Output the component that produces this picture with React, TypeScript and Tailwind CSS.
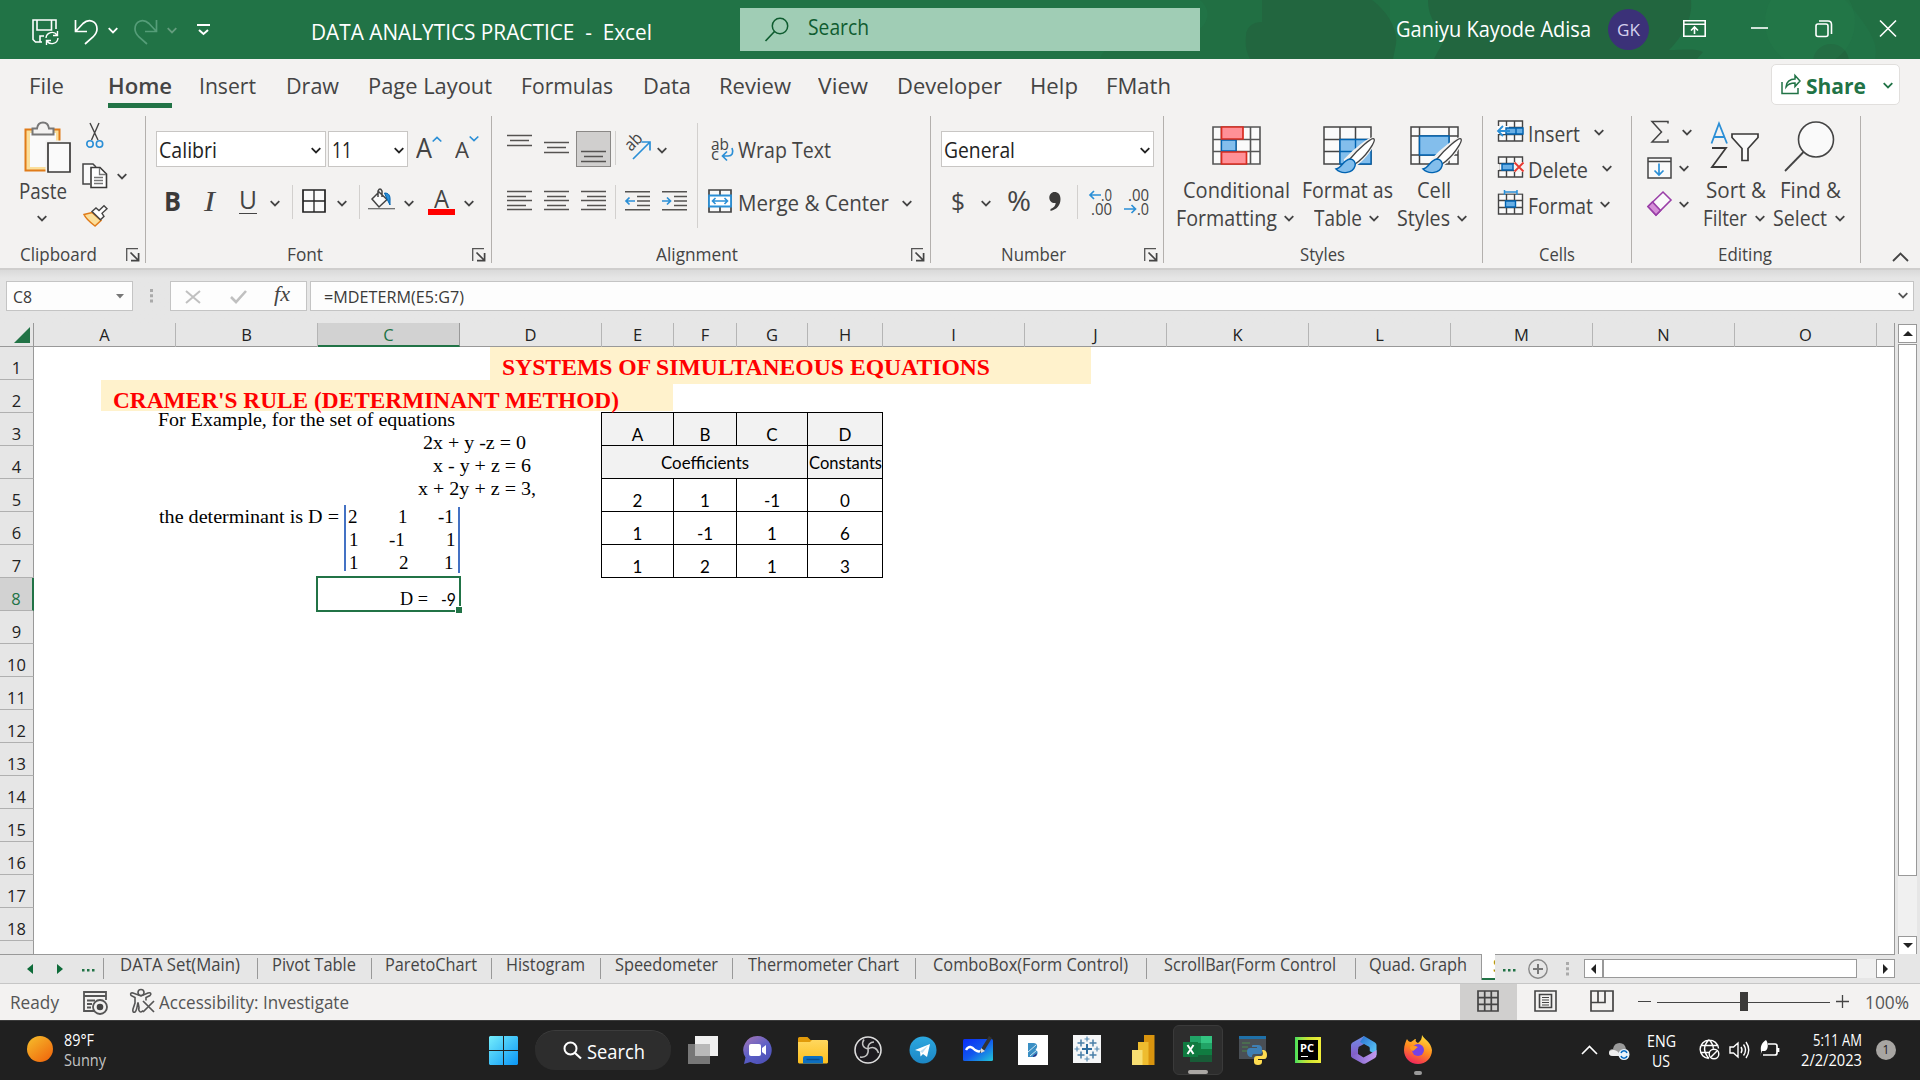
import React, { useLayoutEffect, useRef, useState } from 'react';

type P = { c?: string; children?: React.ReactNode };

/* Single line of text stretched horizontally to fill the width of its box. */
function T({ c = '', children }: P) {
  const box = useRef<HTMLSpanElement>(null);
  const inner = useRef<HTMLSpanElement>(null);
  const [k, setK] = useState(1);
  useLayoutEffect(() => {
    if (box.current && inner.current && inner.current.offsetWidth) {
      setK(box.current.clientWidth / inner.current.getBoundingClientRect().width);
    }
  }, []);
  return (
    <span ref={box} className={`block shrink-0 whitespace-pre ${c}`}>
      <span ref={inner} className="inline-block origin-left" style={{ transform: `scaleX(${k})` }}>
        {children}
      </span>
    </span>
  );
}

function I({ w, h, c = '', children }: P & { w: number; h: number }) {
  return (
    <svg width={w} height={h} viewBox={`0 0 ${w} ${h}`} fill="none" className={`block shrink-0 overflow-visible ${c}`}>
      {children}
    </svg>
  );
}

function Chev({ c = '' }: P) {
  return (
    <I w={10} h={7} c={c}>
      <path d="M.7 1.2 5 5.4 9.3 1.2" stroke="currentColor" strokeWidth="1.8" />
    </I>
  );
}

function Launcher({ c = '' }: P) {
  return (
    <I w={14} h={14} c={c}>
      <path d="M.7 13V.7H12" stroke="#555" strokeWidth="1.3" />
      <path d="M4.5 4.5 12 12M12.6 5v7.6H5" stroke="#444" strokeWidth="1.7" />
    </I>
  );
}

function Group({ c, children }: P) {
  return <div className={`flex h-[147px] shrink-0 flex-col border-r border-[#b3b0ad] ${c}`}>{children}</div>;
}

function Lines({ rows, w = 25, h = 21, c = '' }: { rows: [number, number, number][]; w?: number; h?: number; c?: string }) {
  return (
    <I w={w} h={h} c={c}>
      {rows.map(([x, y, l]) => (
        <path key={y} d={`M${x} ${y + 0.5}h${l}`} stroke="#555351" strokeWidth="1.5" />
      ))}
    </I>
  );
}

function TitleBar() {
  return (
    <div className="relative flex h-[59px] items-start overflow-hidden bg-[#217346] text-white">
      <svg width="820" height="59" viewBox="0 0 820 59" className="absolute top-0 right-0">
        <g fill="#22663f">
          <path d="M0 59c2-8 12-16 30-18 40 0 70-5 76-20 4-8 0-16-6-21h190v59z" opacity=".35" />
          <path d="M146 36c0-8 6-14 16-14V0h110c16 12 26 30 24 44l-3 15H150c-4-8-5-14-4-23z" />
          <path d="M328 0h263c2 20-10 38-22 50 14 0 26-2 34 2l-6 7H334c6-12 12-18 10-28-10-6-16-16-16-31z" />
          <circle cx="731" cy="62" r="18" />
          <path d="M745 0h75v59h-45c4-14-4-30-30-59z" opacity=".3" />
        </g>
        <circle cx="710" cy="22" r="45" fill="#257a4b" opacity=".35" />
      </svg>
      <div className="relative flex w-full items-start">
        <I w={27} h={27} c="ml-8 mt-[19px]">
          <path d="M10 23H3.5L1 20.500V1h23v9M5 1v10h14.500V1M8 23v-6h4" stroke="#fff" strokeWidth="1.6" />
          <path d="M14 19c.5-6 8-7.500 11-3M25.500 12v4.500H21M26 19c-.5 6-8 7.500-11 3M14.500 26v-4.500H19" stroke="#fff" strokeWidth="1.4" />
        </I>
        <I w={25} h={26} c="ml-[15px] mt-[19px]">
          <path d="M1.500 1v11.500H13M2 12 9 4.500C15-1 23 2 23 10c0 4-2 6-4 8l-8 7" stroke="#fff" strokeWidth="1.7" />
        </I>
        <Chev c="ml-[9px] mt-[27px]" />
        <I w={25} h={26} c="ml-[15px] mt-[19px] opacity-30">
          <path d="M23.500 1v11.500H12M23 12 16 4.500C10-1 2 2 2 10c0 4 2 6 4 8l8 7" stroke="#cfe" strokeWidth="1.7" />
        </I>
        <Chev c="ml-[9px] mt-[27px] opacity-30" />
        <I w={13} h={12} c="ml-5 mt-6">
          <path d="M0 1h13M2 6l4.500 4L11 6" stroke="#fff" strokeWidth="2" />
        </I>
        <T c="ml-[101px] mt-[17.5px] w-[341px] text-[21px] leading-[28px]">DATA ANALYTICS PRACTICE  -  Excel</T>
        <div className="ml-[88px] mt-2 flex h-[43px] w-[460px] items-start bg-[#a0cdb5] text-[#0f5c30]">
          <I w={24} h={25} c="ml-[25px] mt-[9px]">
            <circle cx="15" cy="9" r="7.700" stroke="currentColor" strokeWidth="1.5" />
            <path d="M9.500 14.500.5 24" stroke="currentColor" strokeWidth="1.700" />
          </I>
          <T c="ml-[19px] mt-[5px] w-[61px] text-[21px] leading-[28px]">Search</T>
        </div>
        <T c="ml-[196px] mt-[15px] w-[195px] text-[21px] leading-[28px]">Ganiyu Kayode Adisa</T>
        <div className="ml-[17px] mt-[9px] flex size-[41px] shrink-0 items-center justify-center rounded-full bg-[#3b3178] text-[16px] text-[#d5d0ee]">
          <T c="w-[23px]">GK</T>
        </div>
        <I w={23} h={17} c="ml-[34px] mt-5">
          <path d="M.8.800h21.400v15.400H.8zM.8 4.300h21.400M11.500 14V7.500M8 10.500 11.500 7l3.500 3.500" stroke="#fff" strokeWidth="1.6" />
        </I>
        <I w={17} h={2} c="ml-[45px] mt-[27px]"><path d="M0 1h17" stroke="#fff" strokeWidth="1.6" /></I>
        <I w={18} h={18} c="ml-[47px] mt-5">
          <rect x="1" y="4" width="12" height="12.500" rx="2" stroke="#fff" strokeWidth="1.6" />
          <path d="M4 1h9q3.500 0 3.500 3.500V14" stroke="#fff" strokeWidth="1.6" />
        </I>
        <I w={18} h={17} c="ml-[46px] mt-5"><path d="M1 .5 17 16.500M17 .5 1 16.500" stroke="#fff" strokeWidth="1.6" /></I>
      </div>
    </div>
  );
}

const MENU: [string, string][] = [
  ['Insert', 'ml-[27px] w-[57px]'],
  ['Draw', 'ml-[30px] w-[53px]'],
  ['Page Layout', 'ml-[29px] w-[124px]'],
  ['Formulas', 'ml-[29px] w-[92px]'],
  ['Data', 'ml-[30px] w-[48px]'],
  ['Review', 'ml-[28px] w-[72px]'],
  ['View', 'ml-[27px] w-[50px]'],
  ['Developer', 'ml-[29px] w-[105px]'],
  ['Help', 'ml-[28px] w-[48px]'],
  ['FMath', 'ml-[28px] w-[65px]'],
];

function MenuTabs() {
  return (
    <div className="flex h-[57px] items-start text-[22px] leading-[30px] text-[#444]">
      <T c="ml-[29px] mt-[11px] w-[35px]">File</T>
      <div className="ml-11 mt-[11px] h-[38px] w-16 border-b-[5px] border-[#217346]">
        <T c="w-16 font-semibold">Home</T>
      </div>
      {MENU.map(([t, c]) => (
        <T key={t} c={`mt-[11px] ${c}`}>{t}</T>
      ))}
      <div className="ml-auto mr-5 mt-[5px] flex h-[41px] w-[129px] items-start rounded-[5px] border border-[#e1dfdd] bg-white text-[#217346]">
        <I w={20} h={21} c="ml-[9px] mt-[9px]">
          <path d="M1 8v11.500h16V14" stroke="#217346" strokeWidth="1.5" />
          <path d="M5 13c0-5 4-8 9-8V1.500L19 7l-5 5.500V9c-4 0-7 1-9 4z" stroke="#217346" strokeWidth="1.5" />
        </I>
        <T c="ml-[5px] mt-[5px] w-[60px] font-bold">Share</T>
        <Chev c="ml-[17px] mt-[17px]" />
      </div>
    </div>
  );
}

function Brush() {
  return (
    <g>
      <path d="M51 13c2 2-9 19-20 26l-6 1-2-6C32 24 49 11 51 13z" fill="#fff" stroke="#f3f2f1" strokeWidth="4" />
      <path d="M51 13c2 2-8 18-19 25l-5-5C35 23 49 11 51 13z" fill="#fff" stroke="#444" strokeWidth="1.4" />
      <path d="M13 43c6-1 7-9 14-10 4 0 6 4 5 7-2 7-13 9-19 3z" fill="#83beec" stroke="#0063b1" strokeWidth="1.4" />
    </g>
  );
}

function RibbonClipboard() {
  return (
    <Group c="w-[146px]">
      <div className="flex h-[126px] shrink-0 items-start">
        <div className="ml-5 w-[52px] pt-[5px]">
          <I w={48} h={52} c="ml-1">
            <path d="M1.500 8.500h34v41h-34z" fill="#fbdf9b" stroke="#e07b19" strokeWidth="2" />
            <path d="M6 12h26v34H6z" fill="#fafafa" />
            <path d="M8.500 13.500V7.500H13c1-8 11-8 12 0h4.500v6z" fill="#f3f2f1" stroke="#777" strokeWidth="2" />
            <path d="M21.500 19.500H48V52H21.500z" fill="#f3f2f1" />
            <path d="M24 22h22v29H24z" fill="#fafafa" stroke="#3b3a39" strokeWidth="1.700" />
          </I>
          <T c="-ml-px mt-[4px] w-[48px] text-[21px] leading-[28px]">Paste</T>
          <Chev c="ml-[17px] mt-[10px]" />
        </div>
        <div className="ml-[10px] w-[26px] pt-[7px]">
          <I w={18} h={26} c="ml-1">
            <path d="M4 0l8 17M13 0 5.500 17" stroke="#444" strokeWidth="1.4" />
            <circle cx="4" cy="21" r="3.200" stroke="#2b8fd6" strokeWidth="1.6" />
            <circle cx="13.500" cy="21" r="3.200" stroke="#2b8fd6" strokeWidth="1.6" />
          </I>
          <I w={26} h={26} c="mt-[14px]">
            <path d="M8 21H1V1h10l3 3" fill="#fafafa" stroke="#444" strokeWidth="1.5" />
            <path d="M9 4.500h9l6.500 6.500v13.500H9z" fill="#fff" stroke="#3b3a39" strokeWidth="1.600" />
            <path d="M17.500 5v6.500H24M12 14.500h9M12 17.500h9M12 20.500h9" stroke="#777" strokeWidth="1.3" />
          </I>
          <I w={25} h={22} c="ml-[1px] mt-[16px]">
            <path d="M1 9.500 9 7.500l9 8-6 5.500C8 18 3 14 1 9.500z" fill="#fbdf9b" stroke="#e07b19" strokeWidth="1.500" />
            <path d="M9 6.500 13 3l3 2.500L21 .8l3 3-5 4.500 2 3-3.500 3.500z" fill="#fff" stroke="#444" strokeWidth="1.400" />
          </I>
        </div>
        <Chev c="ml-[9px] mt-[57px]" />
      </div>
      <div className="flex items-start">
        <T c="ml-5 w-[77px] text-[18.500px] leading-[24px]">Clipboard</T>
        <Launcher c="ml-[29px] mt-[6px]" />
      </div>
    </Group>
  );
}

function RibbonFont() {
  return (
    <Group c="w-[346px]">
      <div className="flex h-[126px] shrink-0 flex-col">
        <div className="mt-[15px] flex h-9 items-start text-[#222]">
          <div className="ml-[10px] flex h-9 w-[170px] items-start border border-[#c8c6c4] bg-white">
            <T c="ml-[2px] mt-[4px] w-[58px] text-[21px] leading-[28px]">Calibri</T>
            <Chev c="ml-[94px] mt-[15px]" />
          </div>
          <div className="ml-[2px] flex h-9 w-[80px] items-start border border-[#c8c6c4] bg-white">
            <T c="ml-[3px] mt-[4px] w-[20px] text-[21px] leading-[28px]">11</T>
            <Chev c="ml-[42px] mt-[15px]" />
          </div>
          <T c="ml-[8px] mt-[2px] w-4 text-[27px] leading-[30px] text-[#444]">A</T>
          <I w={10} h={7} c="mt-[5px]"><path d="M.7 5.500 5 1.500l4.300 4" stroke="#2b8fd6" strokeWidth="1.7" /></I>
          <T c="ml-[13px] mt-[3px] w-[14px] text-[22px] leading-[30px] text-[#444]">A</T>
          <I w={10} h={7} c="mt-[4px]"><path d="M.7 1.500 5 5.500l4.300-4" stroke="#2b8fd6" strokeWidth="1.7" /></I>
        </div>
        <div className="mt-[18px] flex h-[34px] items-start">
          <T c="ml-[18px] mt-0 w-[17px] text-[26px] leading-[32px] font-bold text-[#3b3a39]">B</T>
          <T c="ml-[23px] mt-[0px] w-[11px] font-['Liberation_Serif'] text-[29px] italic leading-[33px]">I</T>
          <div className="ml-[24px] h-[29px] w-[18px] border-b-[1.500px] border-[#444]">
            <T c="-ml-[0.5px] w-[18px] text-[26px] leading-[29px]">U</T>
          </div>
          <Chev c="ml-[13px] mt-[15px]" />
          <div className="ml-3 h-[34px] w-px bg-[#d2d0ce]" />
          <I w={24} h={24} c="ml-[9px] mt-1">
            <path d="M1 1h22v22H1z" fill="#fafafa" stroke="#222" strokeWidth="1.700" />
            <path d="M12 1v22M1 12h22" stroke="#222" strokeWidth="1.300" />
          </I>
          <Chev c="ml-[11px] mt-[15px]" />
          <div className="ml-3 h-[34px] w-px bg-[#d2d0ce]" />
          <I w={27} h={22} c="ml-2 mt-[3px]">
            <path d="M4 11 11 4l8 7.500-8 7.500zM10 9V3q2-4 4 0v6" fill="#fafafa" stroke="#444" strokeWidth="1.500" />
            <path d="M16.500 5c4 0 6 2 5.500 8v4l-3-6z" fill="#2b8fd6" stroke="#0063b1" />
            <path d="M0 20.700h27" stroke="#666" strokeWidth="1.200" />
          </I>
          <Chev c="ml-[9px] mt-[15px]" />
          <div className="ml-[14px] h-[30px] w-[27px] border-b-[6px] border-[#f00]">
            <T c="ml-[6px] w-[15px] text-[26px] leading-[26px]">A</T>
          </div>
          <Chev c="ml-[9px] mt-[15px]" />
        </div>
      </div>
      <div className="flex items-start">
        <T c="ml-[141px] w-[36px] text-[18.500px] leading-[24px]">Font</T>
        <Launcher c="ml-[149px] mt-[6px]" />
      </div>
    </Group>
  );
}

function RibbonAlignment() {
  return (
    <Group c="w-[439px]">
      <div className="flex h-[126px] shrink-0 items-start">
        <div className="w-[205px]">
          <div className="mt-[15px] flex h-9 items-start">
            <Lines c="ml-[15px] mt-1" h={13} rows={[[0, 0, 25], [3, 5, 19], [0, 10, 25]]} />
            <Lines c="ml-3 mt-[11px]" h={13} rows={[[0, 0, 25], [3, 5, 19], [0, 10, 25]]} />
            <div className="ml-[7px] flex h-9 w-[35px] border border-[#8a8886] bg-[#d0cfce]">
              <Lines c="ml-1 mt-[19px]" h={13} rows={[[0, 0, 25], [3, 5, 19], [0, 10, 25]]} />
            </div>
            <div className="ml-1 h-[34px] w-px bg-[#d2d0ce]" />
            <I w={27} h={27} c="ml-[9px] mt-[3px]">
              <text x="6" y="18" transform="rotate(-45 6 18)" fontSize="17" fill="#444" fontFamily="Open Sans" textLength="18" lengthAdjust="spacingAndGlyphs">ab</text>
              <path d="M8 25 24.500 8.500M16.500 8H25v8.500" stroke="#2b8fd6" strokeWidth="1.700" />
            </I>
            <Chev c="ml-[5px] mt-4" />
          </div>
          <div className="mt-[18px] flex h-[34px] items-start">
            <Lines c="ml-[15px] mt-[6px]" rows={[[0, 0, 25], [0, 5, 19], [0, 9, 25], [0, 14, 19], [0, 18, 25]]} />
            <Lines c="ml-3 mt-[6px]" rows={[[0, 0, 25], [3, 5, 19], [0, 9, 25], [3, 14, 19], [0, 18, 25]]} />
            <Lines c="ml-3 mt-[6px]" rows={[[0, 0, 25], [6, 5, 19], [0, 9, 25], [6, 14, 19], [0, 18, 25]]} />
            <div className="ml-[9px] h-[34px] w-px bg-[#d2d0ce]" />
            {[0, 1].map((n) => (
              <I key={n} w={26} h={21} c={n ? 'ml-[11px] mt-[6px]' : 'ml-[9px] mt-[6px]'}>
                <path d="M0 .8h25M12 5.500h13M12 10h13M12 14.500h13M0 18.800h25" stroke="#555351" strokeWidth="1.500" />
                <path d={n ? 'M0 10h8M5 6.500 8.500 10 5 13.500' : 'M1 10h9M4.500 6.500 1 10l3.500 3.500'} stroke="#2b8fd6" strokeWidth="1.700" />
              </I>
            ))}
          </div>
        </div>
        <div className="mt-[7px] h-[105px] w-px bg-[#d2d0ce]" />
        <div>
          <div className="mt-[19px] flex h-[32px] items-start">
            <I w={24} h={26} c="ml-[13px] mt-px">
              <text x="0" y="13.5" fontSize="16.5" fill="#444" fontFamily="Open Sans" textLength="18" lengthAdjust="spacingAndGlyphs">ab</text>
              <text x="0" y="24" fontSize="16.5" fill="#444" fontFamily="Open Sans" textLength="8" lengthAdjust="spacingAndGlyphs">c</text>
              <path d="M21 12c2 5 0 8-4 8h-5M16 15.500 11.500 20l4.500 4.500" stroke="#2b8fd6" strokeWidth="1.700" />
            </I>
            <T c="ml-[3px] mt-[1px] w-[93px] text-[21px] leading-[28px]">Wrap Text</T>
          </div>
          <div className="mt-[18px] flex h-[34px] items-start">
            <I w={24} h={24} c="ml-[10px] mt-1">
              <path d="M1 1h22v22H1zM12 1v22" fill="#fafafa" stroke="#444" strokeWidth="1.700" />
              <path d="M1 6.500h22v11H1z" fill="#fff" stroke="#2b8fd6" strokeWidth="1.800" />
              <path d="M4.500 12h15M7.500 9l-3 3 3 3M16.500 9l3 3-3 3" stroke="#2b8fd6" strokeWidth="1.600" />
            </I>
            <T c="ml-[6px] mt-[4px] w-[151px] text-[21px] leading-[28px]">Merge &amp; Center</T>
            <Chev c="ml-[13px] mt-[15px]" />
          </div>
        </div>
      </div>
      <div className="flex items-start">
        <T c="ml-[164px] w-[82px] text-[18.500px] leading-[24px]">Alignment</T>
        <Launcher c="ml-[173px] mt-[6px]" />
      </div>
    </Group>
  );
}

function Decimals({ inc }: { inc?: boolean }) {
  return (
    <div className={inc ? 'ml-3 mt-[3px] w-[25px] text-[15.500px] leading-[14px]' : 'ml-[11px] mt-[3px] w-[23px] text-[15.500px] leading-[14px]'}>
      {inc ? (
        <>
          <div className="flex justify-end"><T c="w-[21px]">.00</T></div>
          <div className="flex justify-between">
            <I w={13} h={10} c="mt-[2px]"><path d="M0 5h11.500M7.500 1l4 4-4 4" stroke="#2b8fd6" strokeWidth="1.700" /></I>
            <T c="w-[12px]">.0</T>
          </div>
        </>
      ) : (
        <>
          <div className="flex justify-between">
            <I w={12} h={10} c="mt-[2px]"><path d="M12 5H1M5 1 1 5l4 4" stroke="#2b8fd6" strokeWidth="1.700" /></I>
            <T c="w-[11px]">.0</T>
          </div>
          <div className="flex justify-end"><T c="w-[21px]">.00</T></div>
        </>
      )}
    </div>
  );
}

function RibbonNumber() {
  return (
    <Group c="w-[233px]">
      <div className="flex h-[126px] shrink-0 flex-col">
        <div className="ml-[10px] mt-[15px] flex h-9 w-[213px] items-start border border-[#c8c6c4] bg-white text-[#222]">
          <T c="ml-[2px] mt-[4px] w-[71px] text-[21px] leading-[28px]">General</T>
          <Chev c="ml-[125px] mt-[15px]" />
        </div>
        <div className="mt-[18px] flex h-[34px] items-start">
          <T c="ml-5 w-[14px] text-[25px] leading-[32px]">$</T>
          <Chev c="ml-4 mt-[15px]" />
          <T c="ml-4 w-[24px] text-[27px] leading-[32px]">%</T>
          <I w={12} h={20} c="ml-[18px] mt-[7px]">
            <path d="M5.500 0C9 0 11.500 2.500 11.500 7c0 6-3.500 10.500-10 12v-2c3-1 5-3 5.200-6C3 11.500.3 9 .3 5.500.3 2.500 2.500 0 5.500 0z" fill="#3b3a39" />
          </I>
          <div className="ml-[16px] h-[34px] w-px bg-[#d2d0ce]" />
          <Decimals />
          <Decimals inc />
        </div>
      </div>
      <div className="flex items-start">
        <T c="ml-[70px] w-[65px] text-[18.500px] leading-[24px]">Number</T>
        <Launcher c="ml-[78px] mt-[6px]" />
      </div>
    </Group>
  );
}

function RibbonStyles() {
  return (
    <Group c="w-[319px]">
      <div className="flex h-[126px] shrink-0 items-start text-[21px] leading-[28px]">
        <div className="ml-[12px] w-[119px] pt-[10px]">
          <I w={49} h={39} c="ml-[36px]">
            <path d="M1 1h47v37H1zM9.500 1v37M38.500 1v37M1 13.500h47M1 25.500h47M24 13v12" fill="#fafafa" stroke="#555" strokeWidth="1.600" />
            <path d="M9.500 14h14.500v11H9.500z" fill="#83beec" stroke="#0063b1" strokeWidth="1.300" />
            <path d="M9.500 1h21.500v12H9.500zM9.500 26h25v12h-25z" fill="#ff9097" stroke="#d92c20" strokeWidth="1.700" />
          </I>
          <T c="ml-[7px] mt-[11px] w-[107px]">Conditional</T>
          <div className="flex items-start"><T c="w-[101px]">Formatting</T><Chev c="ml-[7px] mt-[11px]" /></div>
        </div>
        <div className="ml-[7px] w-[91px] pt-[10px]">
          <I w={53} h={49} c="ml-[21px]">
            <path d="M1 1h47v37H1zM17 1v37M32.500 1v37M1 13.500h47M1 25.500h47" fill="#fafafa" stroke="#444" strokeWidth="1.500" />
            <path d="M17 13.500h31V38H17zM32.500 13.500V38M17 25.500h31" fill="#83beec" stroke="#0063b1" strokeWidth="1.400" />
            <Brush />
          </I>
          <T c="mt-px w-[91px]">Format as</T>
          <div className="flex items-start"><T c="ml-3 w-[48px]">Table</T><Chev c="ml-[7px] mt-[11px]" /></div>
        </div>
        <div className="ml-[4px] w-[72px] pt-[10px]">
          <I w={53} h={49} c="ml-[13px]">
            <path d="M1 1h47v37H1zM9.500 1v37M39 1v37M1 10h47M1 29h47" fill="#fafafa" stroke="#444" strokeWidth="1.500" />
            <path d="M9.500 10H39v19H9.500z" fill="#83beec" stroke="#0063b1" strokeWidth="1.500" />
            <Brush />
          </I>
          <T c="ml-5 mt-px w-[34px]">Cell</T>
          <div className="flex items-start"><T c="w-[53px]">Styles</T><Chev c="ml-[7px] mt-[11px]" /></div>
        </div>
      </div>
      <T c="ml-[136px] w-[45px] text-[18.500px] leading-[24px]">Styles</T>
    </Group>
  );
}

function CellGrid({ kind }: { kind: string }) {
  return (
    <I w={27} h={26}>
      <path d="M1.500 4h24v20h-24zM9.500 4v20M17.500 4v20M1.500 10.500h24M1.500 17.500h24" fill="#fafafa" stroke="#444" strokeWidth="1.400" />
      {kind === 'Insert' && (
        <>
          <path d="M0 9h12v8H0z" fill="#fafafa" />
          <path d="M9 11h17v6H9zM19 11v6" fill="#69afe5" stroke="#0063b1" strokeWidth="1.400" />
          <path d="M1 14h12M6 9l-5 5 5 5" stroke="#2b8fd6" strokeWidth="1.800" />
        </>
      )}
      {kind === 'Delete' && (
        <>
          <path d="M0 11h2v6H0z" fill="#f3f2f1" />
          <path d="M5 11h11v6H5z" fill="#69afe5" stroke="#0063b1" strokeWidth="1.400" />
          <path d="M17 9h10v10H17z" fill="#f3f2f1" />
          <path d="m17.500 9.500 9 9M26.500 9.500l-9 9" stroke="#e8382f" strokeWidth="1.800" />
        </>
      )}
      {kind === 'Format' && (
        <>
          <path d="M8.500 11h10v6h-10z" fill="#69afe5" stroke="#0063b1" strokeWidth="1.400" />
          <path d="M0 0h27v3.500H0z" fill="#f3f2f1" />
          <path d="M7.500 0v5M20 0v5M7.500 2H20" stroke="#2b8fd6" strokeWidth="1.500" />
        </>
      )}
    </I>
  );
}

function RibbonCells() {
  const rows: [string, string, string][] = [
    ['Insert', 'w-[52px]', 'ml-[14px]'],
    ['Delete', 'w-[60px]', 'ml-[14px]'],
    ['Format', 'w-[65px]', 'ml-[7px]'],
  ];
  return (
    <Group c="w-[149px]">
      <div className="h-[126px] shrink-0">
        {rows.map(([t, w, m], n) => (
          <div key={t} className="ml-[14px] flex h-9 items-start text-[21px] leading-[28px]">
            <div className={n === 2 ? 'mt-[2px]' : 'mt-px'}><CellGrid kind={t} /></div>
            <T c={`ml-[4px] mt-[4px] ${w}`}>{t}</T>
            <Chev c={`mt-[13px] ${m}`} />
          </div>
        ))}
      </div>
      <T c="ml-[56px] w-[36px] text-[18.500px] leading-[24px]">Cells</T>
    </Group>
  );
}

function RibbonEditing() {
  return (
    <Group c="w-[229px]">
      <div className="flex h-[126px] shrink-0 items-start text-[21px] leading-[28px]">
        <div className="ml-[15px] w-[46px]">
          <div className="flex h-9 items-start">
            <I w={20} h={24} c="ml-[3px] mt-1"><path d="M18 3.500V1.500H2L11.500 12 2 22h16v-2.500" stroke="#444" strokeWidth="1.500" /></I>
            <Chev c="ml-3 mt-[13px]" />
          </div>
          <div className="flex h-9 items-start">
            <I w={25} h={22} c="mt-[5px]">
              <path d="M1 1h23v20H1zM1 4.500h23" fill="#fafafa" stroke="#444" strokeWidth="1.500" />
              <path d="M12 6.500v11M7.500 13.500l4.500 4.500 4.500-4.500" stroke="#2b8fd6" strokeWidth="1.700" />
            </I>
            <Chev c="ml-[7px] mt-[13px]" />
          </div>
          <div className="flex h-9 items-start">
            <I w={25} h={26} c="mt-[3px]">
              <path d="M1 15.500 16 1l8 8L9 24z" fill="#fafafa" stroke="#9a3fa8" strokeWidth="1.600" />
              <path d="M1 15.500 5.500 11l8 8.500L9 24z" fill="#d58fd8" stroke="#9a3fa8" strokeWidth="1.600" />
            </I>
            <Chev c="ml-[7px] mt-[13px]" />
          </div>
        </div>
        <div className="ml-[10px] w-[64px] pt-[5px]">
          <I w={51} h={52} c="ml-[7px]">
            <path d="M1.500 22.500 9 2.500l8 20M4 16h10.500" stroke="#2b8fd6" strokeWidth="1.800" />
            <path d="M2 27h14L2 46h15" stroke="#3b3a39" strokeWidth="1.800" />
            <path d="M22 13h26v3.500l-10 11V39.500h-6V27.500L22 16.500z" fill="#fafafa" stroke="#3b3a39" strokeWidth="1.700" />
          </I>
          <T c="ml-[3px] mt-[3px] w-[60px]">Sort &amp;</T>
          <div className="flex items-start"><T c="w-[44px]">Filter</T><Chev c="ml-[8px] mt-[11px]" /></div>
        </div>
        <div className="ml-[6px] w-[74px] pt-[5px]">
          <I w={51} h={52} c="ml-[11px]">
            <circle cx="32" cy="18.500" r="17.500" fill="#fafafa" stroke="#444" strokeWidth="1.600" />
            <path d="M19.500 31 1 50" stroke="#444" strokeWidth="1.800" />
          </I>
          <T c="ml-[7px] mt-[3px] w-[61px]">Find &amp;</T>
          <div className="flex items-start"><T c="w-[54px]">Select</T><Chev c="ml-[8px] mt-[11px]" /></div>
        </div>
      </div>
      <T c="ml-[86px] w-[54px] text-[18.500px] leading-[24px]">Editing</T>
    </Group>
  );
}

function FormulaBar() {
  return (
    <div className="flex h-[55px] items-start border-t-2 border-[#cfcecd] bg-[#e6e6e6] bg-linear-to-b from-[#dadada] to-[#e6e6e6] to-15% pt-[11px] text-[17px] text-[#3b3a39]">
      <div className="ml-[6px] flex h-[30px] w-[127px] items-start border border-[#c4c4c4] bg-[#fdfdfd]">
        <T c="ml-[6px] mt-[3px] w-[19px] leading-[23px]">C8</T>
        <I w={8} h={5} c="ml-[84px] mt-3"><path d="M0 0h8L4 4.500z" fill="#777" /></I>
      </div>
      <I w={4} h={14} c="ml-[17px] mt-2"><path d="M0 0h3v3H0zM0 5.300h3v3H0zM0 10.600h3v3H0z" fill="#aaa" /></I>
      <div className="ml-[16px] flex h-[30px] w-[137px] items-start border border-[#c4c4c4] bg-[#fdfdfd]">
        <I w={16} h={14} c="ml-[14px] mt-[8px]"><path d="M1 1l14 12M15 1 1 13" stroke="#c0c0c0" strokeWidth="2" /></I>
        <I w={17} h={14} c="ml-[29px] mt-[8px]"><path d="M1 7l5 5L16 1" stroke="#c0c0c0" strokeWidth="2.600" /></I>
        <T c="ml-[27px] mt-0 w-[16px] font-['Liberation_Serif'] text-[22px] italic leading-[24px] text-[#444]">fx</T>
      </div>
      <div className="ml-[3px] flex h-[30px] w-[1604px] items-start justify-between border border-[#c4c4c4] bg-[#fdfdfd]">
        <T c="ml-[13px] mt-[3px] w-[140px] leading-[23px]">=MDETERM(E5:G7)</T>
        <Chev c="mr-[5px] mt-[10px] text-[#555]" />
      </div>
    </div>
  );
}

const COLS: [string, string][] = [
  ['A', 'w-[142px]'], ['B', 'w-[142px]'], ['C', 'w-[142px]'], ['D', 'w-[142px]'],
  ['E', 'w-[72px]'], ['F', 'w-[63px]'], ['G', 'w-[71px]'], ['H', 'w-[75px]'],
  ['I', 'w-[142px]'], ['J', 'w-[142px]'], ['K', 'w-[142px]'], ['L', 'w-[142px]'],
  ['M', 'w-[142px]'], ['N', 'w-[142px]'], ['O', 'w-[142px]'],
];

const TABLE = [
  ['A', 'B', 'C', 'D'],
  ['2', '1', '-1', '0'],
  ['1', '-1', '1', '6'],
  ['1', '2', '1', '3'],
];

const MATRIX: [string, string][][] = [
  [['2', 'left-0'], ['1', 'left-[50px]'], ['-1', 'left-[90px]']],
  [['1', 'left-px'], ['-1', 'left-[41px]'], ['1', 'left-[98px]']],
  [['1', 'left-px'], ['2', 'left-[51px]'], ['1', 'left-[96px]']],
];

function Cell({ t, shaded }: { t: string; shaded?: boolean }) {
  return (
    <div className={`flex items-end justify-center text-[17px] leading-[21px] ${shaded ? 'bg-[#f2f2f2]' : 'bg-white'}`}>{t}</div>
  );
}

function Sheet() {
  return (
    <div className="flex h-[631px] bg-[#e6e6e6]">
      <div className="w-[1895px] border-r border-[#999]">
        <div className="flex h-6 border-b border-[#999] text-[16.500px] leading-[24px] text-[#222]">
          <div className="flex w-[34px] items-end border-r border-[#999]">
            <I w={16} h={16} c="mb-[3px] ml-[14px]"><path d="M16 0v16H0z" fill="#217346" /></I>
          </div>
          {COLS.map(([t, w]) => (
            <div
              key={t}
              className={`h-6 shrink-0 border-r text-center ${w} ${
                t === 'C' ? 'border-b-2 border-r-[#999] border-b-[#217346] bg-[#d2d2d2] text-[#217346]' : 'border-[#b5b5b5]'
              }`}
            >
              {t}
            </div>
          ))}
        </div>
        <div className="flex h-[607px] overflow-hidden">
          <div className="w-[34px] shrink-0 overflow-hidden text-center text-[16.500px] text-[#222]">
            {Array.from({ length: 19 }, (_, n) => (
              <div
                key={n}
                className={`flex h-[33px] items-end justify-center border-b border-[#b0b0b0] leading-[22px] ${
                  n === 7 ? 'border-r-2 border-r-[#217346] bg-[#d2d2d2] text-[#217346]' : 'border-r border-r-[#999]'
                }`}
              >
                {n < 18 ? n + 1 : ''}
              </div>
            ))}
          </div>
          <div className="relative flex-1 bg-white font-['Liberation_Serif'] text-[19px] leading-[23px] text-black">
            <div className="ml-[567px] mt-[65px] grid w-[282px] grid-cols-[71px_62px_70px_74px] grid-rows-[32px_32px_32px_32px_32px] gap-px bg-black p-px font-['Lato']">
              {TABLE[0].map((t) => <Cell key={t} t={t} shaded />)}
              <div className="col-span-3 flex items-center justify-center bg-[#f2f2f2] text-[17px]"><T c="w-[88px]">Coefficients</T></div>
              <div className="flex items-center justify-center bg-[#f2f2f2] text-[17px]"><T c="w-[73px]">Constants</T></div>
              {TABLE.slice(1).flat().map((t, n) => <Cell key={n} t={t} />)}
            </div>
            <div className="absolute left-[67px] top-[33px] h-[31px] w-[572px] bg-[#fff2cc]" />
            <div className="absolute left-[456px] top-0 h-[37px] w-[601px] bg-[#fff2cc] pl-3 pt-[8px]">
              <T c="w-[488px] text-[22.500px] font-bold leading-[26px] text-[#f00]">SYSTEMS OF SIMULTANEOUS EQUATIONS</T>
            </div>
            <T c="absolute left-[79px] top-[41px] w-[506px] text-[22.500px] font-bold leading-[26px] text-[#f00]">CRAMER'S RULE (DETERMINANT METHOD)</T>
            <T c="absolute left-[124px] top-[61px] w-[297px]">For Example, for the set of equations</T>
            <T c="absolute left-[389px] top-[84px] w-[103px]">2x + y -z = 0</T>
            <T c="absolute left-[399px] top-[107px] w-[98px]">x - y + z = 6</T>
            <T c="absolute left-[384px] top-[130px] w-[118px]">x + 2y + z = 3,</T>
            <T c="absolute left-[125px] top-[158px] w-[180px]">the determinant is D =</T>
            <div className="absolute left-[314px] top-[158px]">
              {MATRIX.map((r, n) => (
                <div key={n} className="relative h-[23px]">
                  {r.map(([t, l], m) => <span key={m} className={`absolute whitespace-nowrap ${l}`}>{t}</span>)}
                </div>
              ))}
            </div>
            <div className="absolute left-[310px] top-[158px] h-[66px] w-[2px] bg-[#4472c4]" />
            <div className="absolute left-[424px] top-[160px] h-[66px] w-[2px] bg-[#4472c4]" />
            <div className="absolute left-[282px] top-[229px] h-[36px] w-[145px] border-2 border-[#217346]">
              <T c="absolute left-[82px] top-[9px] w-[28px]">D =</T>
              <T c="absolute left-[123px] top-[10px] w-[15px] font-['Lato'] text-[17px]">-9</T>
              <div className="absolute -bottom-[3px] -right-[3px] size-[7px] border-l border-t border-white bg-[#217346]" />
            </div>
          </div>
        </div>
      </div>
      <div className="-mb-px ml-[3px] mt-px flex w-[19px] flex-col bg-[#f0f0f0]">
        <div className="flex h-[19px] items-center justify-center border border-[#999] bg-white">
          <I w={10} h={5}><path d="M0 5h10L5 0z" fill="#222" /></I>
        </div>
        <div className="mt-[1px] h-[532px] border border-[#999] bg-white" />
        <div className="mt-auto flex h-[19px] items-center justify-center border border-[#999] bg-white">
          <I w={10} h={5}><path d="M0 0h10L5 5z" fill="#222" /></I>
        </div>
      </div>
    </div>
  );
}

const TABS: [string, string, string][] = [
  ['DATA Set(Main)', 'ml-4 w-[120px]', 'ml-[17px]'],
  ['Pivot Table', 'ml-[14px] w-[84px]', 'ml-[15px]'],
  ['ParetoChart', 'ml-[13px] w-[92px]', 'ml-[14px]'],
  ['Histogram', 'ml-[14px] w-[79px]', 'ml-[15px]'],
  ['Speedometer', 'ml-[14px] w-[103px]', 'ml-[14px]'],
  ['Thermometer Chart', 'ml-[15px] w-[151px]', 'ml-[16px]'],
  ['ComboBox(Form Control)', 'ml-[17px] w-[195px]', 'ml-[18px]'],
  ['ScrollBar(Form Control', 'ml-[17px] w-[172px]', 'ml-[19px]'],
  ['Quad. Graph', 'ml-[13px] w-[98px]', 'ml-[14px]'],
];

function SheetTabs() {
  return (
    <div className="flex h-[30px] items-start border-b border-[#c6c6c6] bg-[#e6e6e6] text-[17.300px] leading-[23px] text-[#444]">
      <div className="flex h-[26px] w-[1482px] items-start border-t border-[#999]">
        <I w={6} h={10} c="ml-[27px] mt-[9px]"><path d="M6 0v10L0 5z" fill="#0e6b39" /></I>
        <I w={6} h={10} c="ml-6 mt-[9px]"><path d="M0 0v10l6-5z" fill="#0e6b39" /></I>
        <I w={14} h={3} c="ml-[19px] mt-[14px]"><path d="M0 0h2.500v2.500H0zM5 0h2.500v2.500H5zM10 0h2.500v2.500H10z" fill="#217346" /></I>
        <div className="ml-[7px] mt-[3px] h-[21px] w-px bg-[#999]" />
        {TABS.map(([t, c, m], n) => (
          <React.Fragment key={t}>
            <T c={`-mt-[2px] ${c}`}>{t}</T>
            <div className={n === 8 ? `-mt-px h-[26px] w-px bg-[#999] ${m}` : `mt-[3px] h-[21px] w-px bg-[#999] ${m}`} />
          </React.Fragment>
        ))}
      </div>
      <div className="flex h-[26px] w-[13px] justify-end overflow-hidden border-b-2 border-[#217346] bg-white">
        <span className="w-[2px] overflow-hidden font-semibold text-[#8a8a1f]">S</span>
      </div>
      <div className="flex h-[26px] w-[400px] items-start border-t border-[#999]">
        <I w={14} h={3} c="ml-2 mt-[14px]"><path d="M0 0h2.500v2.500H0zM5 0h2.500v2.500H5zM10 0h2.500v2.500H10z" fill="#217346" /></I>
        <I w={20} h={20} c="ml-[11px] mt-[4px]">
          <circle cx="10" cy="10" r="9.200" stroke="#888" strokeWidth="1.400" />
          <path d="M10 5v10M5 10h10" stroke="#777" strokeWidth="2" />
        </I>
        <I w={4} h={14} c="ml-[18px] mt-[7px]"><path d="M0 0h3v3H0zM0 5.300h3v3H0zM0 10.600h3v3H0z" fill="#aaa" /></I>
        <div className="ml-[14px] mt-[4px] flex h-[19px] w-[311px] bg-[#f0f0f0]">
          <div className="flex w-[19px] items-center justify-center border border-[#999] bg-white"><I w={5} h={10}><path d="M5 0v10L0 5z" fill="#222" /></I></div>
          <div className="w-[254px] border border-[#999] bg-white" />
          <div className="ml-auto flex w-[19px] items-center justify-center border border-[#999] bg-white"><I w={5} h={10}><path d="M0 0v10l5-5z" fill="#222" /></I></div>
        </div>
      </div>
    </div>
  );
}

function StatusBar() {
  return (
    <div className="flex h-9 items-start bg-[#f3f2f1] text-[18px] leading-[24px] text-[#555]">
      <T c="ml-[10px] mt-[6px] w-[49px]">Ready</T>
      <I w={25} h={24} c="ml-6 mt-[7px]">
        <path d="M11 20H1V1h22v8M1 5h22M4 9.500h8M4 13h5M4 16.500h4" stroke="#555" strokeWidth="1.800" />
        <circle cx="17" cy="16" r="7" stroke="#555" strokeWidth="1.800" />
        <circle cx="17" cy="16" r="3.300" fill="#444" />
      </I>
      <I w={26} h={26} c="ml-[22px] mt-[4px]">
        <circle cx="11" cy="4.500" r="3" stroke="#555" strokeWidth="1.600" />
        <path d="M13 22.500c-2 3-5 1-4-3l-1-5c-1 4-1 8-3 9.500-2 1-2.500-1-2-3l2-6V9.500L1 7.500c-1-2 0-3 2-2.500l8 3 7-3c3-1 3.500 1 2 2.500l-4 2v3" stroke="#555" strokeWidth="1.600" />
        <path d="m13 13 11 11M24 13 13 24" stroke="#555" strokeWidth="1.700" />
      </I>
      <T c="ml-[3px] mt-[6px] w-[190px]">Accessibility: Investigate</T>
      <div className="ml-[1111px] h-9 w-[57px] bg-[#d0cfce] pl-[17px] pt-[6px]">
        <I w={22} h={22}><path d="M1 1h20v20H1zM7.700 1v20M14.300 1v20M1 7.700h20M1 14.300h20" stroke="#444" strokeWidth="1.700" /></I>
      </div>
      <I w={23} h={22} c="ml-[17px] mt-[6px]">
        <path d="M1 1h21v20H1zM5.500 4.500h12v13h-12z" stroke="#444" strokeWidth="1.600" />
        <path d="M8 7.500h7M8 10h7M8 12.500h7M8 15h7" stroke="#444" strokeWidth="1.200" />
      </I>
      <I w={24} h={22} c="ml-[33px] mt-[6px]"><path d="M1 1h22v20H1zM1 12.500h14V1M8 1v11.500" stroke="#444" strokeWidth="1.700" /></I>
      <div className="ml-[24px] mt-[17px] h-px w-[13px] bg-[#444]" />
      <div className="ml-[6px] mt-[18px] h-px w-[83px] bg-[#444]" />
      <div className="mt-2 h-[19px] w-2 bg-[#3b3a39]" />
      <div className="mt-[18px] h-px w-[82px] bg-[#444]" />
      <I w={13} h={13} c="ml-[6px] mt-[11px]"><path d="M6.500 0v13M0 6.500h13" stroke="#444" strokeWidth="1.300" /></I>
      <T c="ml-[16px] mt-[6px] w-[44px]">100%</T>
    </div>
  );
}

function Taskbar() {
  return (
    <div className="flex h-[60px] items-start border-t border-[#3a3a3a] bg-[#202020] text-white">
      <I w={26} h={26} c="ml-[27px] mt-[15px]">
        <defs>
          <linearGradient id="sun" x1="0" y1="0" x2=".8" y2="1"><stop stopColor="#f6c02c" /><stop offset="1" stopColor="#f0680d" /></linearGradient>
          <linearGradient id="win" x1="0" y1="0" x2="1" y2="1"><stop stopColor="#75eefc" /><stop offset="1" stopColor="#0a95f5" /></linearGradient>
          <linearGradient id="chat" x1="0" y1="0" x2=".6" y2="1"><stop stopColor="#a776b4" /><stop offset=".6" stopColor="#5b5fc7" /><stop offset="1" stopColor="#4f52b8" /></linearGradient>
          <linearGradient id="tele" x1="0" y1="0" x2="0" y2="1"><stop stopColor="#2ca8e0" /><stop offset="1" stopColor="#1c86c4" /></linearGradient>
          <linearGradient id="board" x1="0" y1="0" x2="1" y2="1"><stop stopColor="#0a2cf5" /><stop offset=".5" stopColor="#1258ee" /><stop offset="1" stopColor="#22c7d8" /></linearGradient>
          <linearGradient id="fold" x1="0" y1="0" x2="0" y2="1"><stop stopColor="#ffd75e" /><stop offset="1" stopColor="#fdbf1e" /></linearGradient>
          <linearGradient id="fox" x1=".7" y1="0" x2=".3" y2="1"><stop stopColor="#ffe03a" /><stop offset=".5" stopColor="#ff8a1f" /><stop offset="1" stopColor="#f0225e" /></linearGradient>
          <linearGradient id="hexL" x1="0" y1="0" x2="0" y2="1"><stop stopColor="#6f8fe6" /><stop offset="1" stopColor="#8a4fc0" /></linearGradient>
          <linearGradient id="hexR" x1="0" y1="0" x2="1" y2="1"><stop stopColor="#2a6fd0" /><stop offset="1" stopColor="#5fd0fa" /></linearGradient>
          <linearGradient id="hexB" x1="0" y1="0" x2="1" y2="0"><stop stopColor="#7a5fc8" /><stop offset="1" stopColor="#c39af0" /></linearGradient>
        </defs>
        <circle cx="13" cy="13" r="13" fill="url(#sun)" />
      </I>
      <div className="ml-[11px] mt-[9px] text-[15.500px] leading-[20px]">
        <T c="w-[30px]">89°F</T>
        <T c="w-[42px] text-[#c4c4c4]">Sunny</T>
      </div>
      <I w={29} h={29} c="ml-[383px] mt-[15px]"><path d="M1 0h13v14H0V1zM15 0h13l1 1v13H15zM0 15h14v14H1l-1-1zM15 15h14v13l-1 1H15z" fill="url(#win)" /></I>
      <div className="ml-[17px] mt-[9px] flex h-10 w-[136px] items-start rounded-full border-t border-[#3c3c3c] bg-[#2d2d2d]">
        <I w={19} h={19} c="ml-7 mt-[10px]"><circle cx="7.500" cy="7.500" r="6" stroke="#fff" strokeWidth="2" /><path d="m12 12 6 5.500" stroke="#fff" strokeWidth="2.200" /></I>
        <T c="ml-[5px] mt-[7px] w-[58px] text-[20px] leading-[28px]">Search</T>
      </div>
      <I w={30} h={28} c="ml-[17px] mt-[15px]">
        <path d="M7 0h23v20H7z" fill="#f0f0f0" /><path d="M0 8h22v20H0z" fill="#777" /><path d="M7 8h15v12H7z" fill="#b9b9b9" />
      </I>
      <I w={29} h={28} c="ml-[25px] mt-[15px]">
        <path d="M14.500 0a14 14 0 1 1-7 26l-6.500 2 1.500-6.500A14 14 0 0 1 14.500 0z" fill="url(#chat)" />
        <rect x="6" y="8" width="12" height="12" rx="2" fill="#fff" /><path d="m19 12 4-3v10l-4-3z" fill="#fff" />
      </I>
      <I w={30} h={27} c="ml-[26px] mt-4">
        <path d="M0 1.500Q0 0 1.500 0h8l3 3H28v9H0z" fill="#e19a0a" />
        <path d="M0 5h12l2-2h15l1 1v21.500l-1 1H1l-1-1z" fill="url(#fold)" />
        <path d="M5 26.500V21q0-2 2-2h16q2 0 2 2v5.500z" fill="#0d6fc0" /><path d="M8.500 22.500h13" stroke="#0a4d8c" strokeWidth="1.400" />
      </I>
      <I w={28} h={28} c="ml-[26px] mt-[15px]">
        <circle cx="14" cy="14" r="13" fill="#1d1b20" stroke="#ddd" strokeWidth="1.600" />
        <path d="M14 13c-5-1-7-5-4-9.500M14 13c5-3 9-1 10.500 4M14 13c1 5-2 9-8 8M14 13c-.5-4 2-7 6-7" stroke="#c4c4c4" strokeWidth="1.500" />
      </I>
      <I w={28} h={28} c="ml-[27px] mt-[15px]">
        <circle cx="14" cy="14" r="13.500" fill="url(#tele)" /><path d="m6 14 15-6-3 13-4-3-2.500 2.500-.5-5z" fill="#fff" /><path d="m11 15.500 8-6-5.500 7.500" fill="#bcdff2" />
      </I>
      <I w={30} h={27} c="ml-[26px] mt-[14px]">
        <rect y="4" width="30" height="22" rx="1.500" fill="url(#board)" />
        <path d="M3 15c3-5 6-3 9 0 3 2 5 2 7 0" stroke="#fff" strokeWidth="2.400" /><path d="m18 14 8-13 3 2-8 13-4 2z" fill="#333" /><path d="m18 13 4 3-4 2z" fill="#ddd" />
      </I>
      <div className="ml-[25px] mt-[14px] flex size-[30px] items-center justify-center bg-white">
        <I w={10} h={14}><path d="M0 0h5.500C10 0 10 5 7.500 6.500 11 8 10 14 5.500 14H0z" fill="#3a8fc4" /><path d="m0 9 8-7M2 13l7-6" stroke="#cfe6f4" /><path d="m5 13 4-3-1 3-3 1z" fill="#2d2f86" /></I>
      </div>
      <I w={28} h={28} c="ml-[25px] mt-[14px]">
        <path d="M0 0h28v28H0z" fill="#f5f6f7" />
        <path d="M14 9v10M9 14h10" stroke="#2f6d9e" strokeWidth="2" />
        <path d="M8 4.500v7M4.500 8h7M20 4.500v7M16.500 8h7M8 16.500v7M4.500 20h7M20 16.500v7M16.500 20h7" stroke="#4a7fa8" strokeWidth="1.500" />
        <path d="M14 1.500v5M11.500 4h5M14 21.500v5M11.500 24h5M1.500 14h5M4 11.500v5M21.500 14h5M24 11.500v5" stroke="#5a8db3" strokeWidth="1.200" />
      </I>
      <I w={23} h={30} c="ml-[31px] mt-[14px]">
        <path d="M12 0h10.500v30H12z" fill="#d9940e" /><path d="M6 7h10.500v23H6z" fill="#eebc2f" /><path d="M0 15h10.500v15H0z" fill="#f7de72" />
      </I>
      <div className="ml-[18px] mt-[4px] flex h-[50px] w-[50px] flex-col items-start rounded-md border border-[#3a3a3a] bg-[#2d2d2d]">
        <I w={29} h={28} c="ml-[9px] mt-[9px]">
          <path d="M7 1h22v26H7z" fill="#21a366" /><path d="M18 1h11v7H18z" fill="#33c481" /><path d="M7 8h11v6H7z" fill="#107c41" /><path d="M7 14h22v7H7z" fill="#107c41" /><path d="M7 20h22v7H7z" fill="#185c37" />
          <path d="M0 7h15v15H0z" fill="#0f7a40" />
          <path d="m4.500 10 6 9M10.500 10l-6 9" stroke="#fff" strokeWidth="2" />
        </I>
        <div className="ml-[14px] mt-[7px] h-1 w-5 rounded-full bg-[#aaa7a4]" />
      </div>
      <I w={29} h={29} c="ml-4 mt-[15px]">
        <path d="M0 0h27v23H0z" fill="#4a4f55" /><path d="M0 0h27v3H0z" fill="#1f70a8" /><path d="M3 7h8M3 11h6M3 15h7" stroke="#4d8a4d" />
        <path d="M14 9h5q4 0 4 4v3q0 2-3 2h-5q-2 0-2 3h-2q-3-1-3-5 0-4 3-4h7v-1h-5v-1q0-1 1-1z" fill="#3f7fb4" />
        <path d="M23 14h2q3 1 3 5 0 4-3 4h-6v1h4v2q0 3-4 3t-4-3v-3q0-3 3-3h4q2 0 2-3z" fill="#ffdc50" />
      </I>
      <div className="ml-[27px] mt-4 flex h-[26px] w-[26px] items-start bg-linear-to-r from-[#3fe05a] via-[#c9e530] to-[#f2ee3a] p-[3px]">
        <div className="size-5 bg-black">
          <T c="ml-[2px] mt-px w-[14px] text-[11px] leading-[13px] font-bold">PC</T>
          <div className="ml-[3px] mt-[2px] h-px w-[7px] bg-white" />
        </div>
      </div>
      <I w={27} h={28} c="ml-[29px] mt-[15px]">
        <path d="M14 0 2.500 6.500Q1 7.500 1 9v11l7 4V13l6-4z" fill="url(#hexL)" />
        <path d="m14 0 11 6.500q1.500 1 1.500 2.500v10l-7-4v-3L10 6z" fill="url(#hexR)" />
        <path d="M1 19.500Q1 21 2.500 22l10 5.500q1.500.7 3 0l9.500-5.500q1.500-1 1.500-3v-5l-6.500 4-6.500 3.500L8 18z" fill="url(#hexB)" />
        <path d="m8.500 11 5.500-3 5.500 3v6L14 20l-5.500-3z" fill="#202020" />
      </I>
      <div className="ml-[27px] mt-[14px] w-[28px]">
        <I w={28} h={29}>
          <path d="M18 0c2 4 9 7 10 15 0 8-6 14-14 14S0 23 0 15C0 10 2 6 3 4c1 2 2 3 4 3 2-1 3-3 5-3-1 2 0 3 2 4 3-2 4-5 4-8z" fill="url(#fox)" />
          <circle cx="14" cy="15" r="6" fill="#7542e5" /><path d="M6 12c3-2 5-1 8 0-2 1-3 3-5 4-2-1-3-2-3-4z" fill="#ff9a20" />
        </I>
        <div className="ml-[10px] mt-[7px] h-1 w-2 rounded-full bg-[#999]" />
      </div>
      <I w={17} h={10} c="ml-[149px] mt-6"><path d="m1 9 7.500-7.500L16 9" stroke="#fff" strokeWidth="1.600" /></I>
      <I w={21} h={18} c="ml-[11px] mt-[21px]">
        <path d="M4 14Q0 14 0 10.500T4 7q1-6 6.500-6T17 7q3 1 3 4t-3 3z" fill="#9a9a9a" /><path d="M4 14Q0 14 0 11t4-3q4-1 8 6z" fill="#eee" />
        <circle cx="15" cy="12.500" r="5.500" fill="#e8f2fa" /><path d="M12 11c1-3 5-3 6 0M18 14c-1 3-5 3-6 0" stroke="#0067c0" strokeWidth="1.500" />
      </I>
      <div className="ml-[17px] mt-[10px] text-[15.500px] leading-[20px]">
        <T c="w-[29px]">ENG</T>
        <T c="ml-[5px] w-[18px]">US</T>
      </div>
      <I w={21} h={21} c="ml-[23px] mt-[18px]">
        <path d="M10 19.500a9.200 9.200 0 1 1 9.500-10M10 .8c-6 6-6 12 0 18.700M10 .8c3 3 4.300 5 4.300 9M1.500 6.500h17M1.500 13.500H10" stroke="#fff" strokeWidth="1.400" />
        <circle cx="15" cy="15" r="4.800" stroke="#fff" strokeWidth="1.400" /><path d="m12 18 6-6" stroke="#fff" strokeWidth="1.400" />
      </I>
      <I w={21} h={18} c="ml-[9px] mt-[20px]">
        <path d="M1 6h3.500L9 2v14l-4.500-4H1zM12 6q2 3 0 6M14.500 3.500q4 5.500 0 11M17 1q5.500 8 0 16" stroke="#fff" strokeWidth="1.400" />
      </I>
      <I w={21} h={18} c="ml-[9px] mt-[18px]">
        <path d="M9 5h7q2 0 2 2v7q0 2-2 2H4M19.500 9v4" stroke="#fff" strokeWidth="1.700" /><path d="M1 17c1-3 1-2 1-5C1 6 4 3 7 1c3 4 2 10-1 11H3z" fill="#fff" />
      </I>
      <div className="ml-[21px] mt-[9px] flex flex-col items-end text-[15.500px] leading-[20px]">
        <T c="w-[49px]">5:11 AM</T>
        <T c="w-[61px]">2/2/2023</T>
      </div>
      <div className="ml-[14px] mt-[19px] size-5 rounded-full bg-[#a7a5a2] text-center text-[12px] leading-[20px] text-[#222]">1</div>
    </div>
  );
}

export default function App() {
  return (
    <div className="flex h-[1080px] w-[1920px] flex-col overflow-hidden bg-[#f3f2f1] font-['Open_Sans',sans-serif] text-[#444]">
      <TitleBar />
      <MenuTabs />
      <div className="flex h-[152px] items-start">
        <RibbonClipboard />
        <RibbonFont />
        <RibbonAlignment />
        <RibbonNumber />
        <RibbonStyles />
        <RibbonCells />
        <RibbonEditing />
        <I w={17} h={10} c="ml-[31px] mt-[136px]"><path d="m1 9 7.500-7.500L16 9" stroke="#444" strokeWidth="1.800" /></I>
      </div>
      <FormulaBar />
      <Sheet />
      <SheetTabs />
      <StatusBar />
      <Taskbar />
    </div>
  );
}
